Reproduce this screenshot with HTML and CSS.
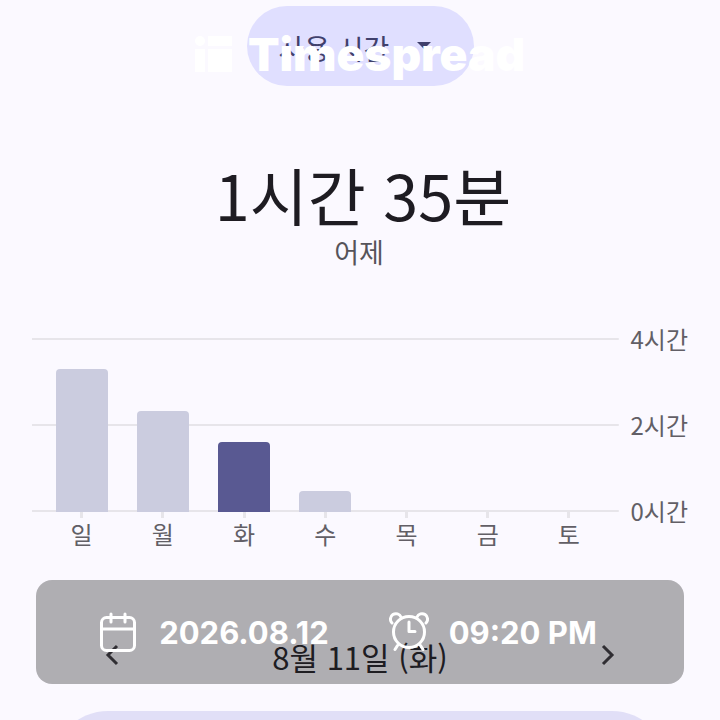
FILE: index.html
```html
<!DOCTYPE html>
<html lang="ko">
<head>
<meta charset="utf-8">
<meta name="viewport" content="width=device-width, initial-scale=1">
<title>Timespread</title>
<link rel="stylesheet" href="styles.css">
</head>
<body>
<main class="screen">
  <div class="picker">
    <select class="picker-select" aria-label="측정 항목"><option>사용 시간</option></select>
    <svg class="picker-caret" width="14" height="8" viewBox="0 0 14 8" aria-hidden="true"><path d="M0 0h14L7 7z"/></svg>
  </div>

  <header class="summary">
    <h1 class="total">1시간 35분</h1>
    <p class="day">어제</p>
  </header>

  <section class="chart" aria-label="주간 사용 시간">
    <div class="plot">
      <div class="bars">
        <div class="slot"><div class="bar" style="height:82%"></div></div>
        <div class="slot"><div class="bar" style="height:58%"></div></div>
        <div class="slot"><div class="bar selected" style="height:40%"></div></div>
        <div class="slot"><div class="bar" style="height:12%"></div></div>
        <div class="slot"></div>
        <div class="slot"></div>
        <div class="slot"></div>
      </div>
      <div class="days">
        <span>일</span><span>월</span><span>화</span><span>수</span><span>목</span><span>금</span><span>토</span>
      </div>
    </div>
    <div class="scale"><span>4시간</span><span>2시간</span><span>0시간</span></div>
  </section>

  <nav class="date-nav">
    <button class="arrow" type="button" aria-label="이전 날짜"><svg width="16" height="24" viewBox="0 0 16 24"><path d="M13 3 4 12l9 9"/></svg></button>
    <span>8월 11일 (화)</span>
    <button class="arrow" type="button" aria-label="다음 날짜"><svg width="16" height="24" viewBox="0 0 16 24"><path d="m3 3 9 9-9 9"/></svg></button>
  </nav>
  <div class="card"></div>

  <div class="brand">
    <svg width="37" height="36" viewBox="0 0 37 36" aria-hidden="true"><circle cx="5" cy="5" r="5"/><path d="M13 0h24v10H13zM0 13h10v23H0zM13 13h24v23H13z"/></svg>
    <span>Timespread</span>
  </div>

  <div class="stamp">
    <div class="stamp-item">
      <svg width="40" height="40" viewBox="0 0 40 40" aria-hidden="true"><rect x="2.500" y="5.500" width="33" height="33" rx="5"/><path d="M3 17h32M12 2v8M26 2v8"/></svg>
      <time datetime="2026-08-12">2026.08.12</time>
    </div>
    <div class="stamp-item">
      <svg width="40" height="40" viewBox="0 0 40 40" aria-hidden="true"><circle cx="20" cy="20" r="15.500"/><path d="M20 10v9.500h6M8.500 33.500 6 37.500M31.500 33.500l2.500 4M3 11a5.500 5.500 0 1 1 9-6M37 11a5.500 5.500 0 1 0-9-6"/></svg>
      <time datetime="21:20">09:20 PM</time>
    </div>
  </div>
</main>
</body>
</html>
```
FILE: styles.css
```css
* {
  box-sizing: border-box;
}

body {
  margin: 0;
  background: #fbf9ff;
  color: #1e1c22;
  font-family: "Noto Sans CJK KR", sans-serif;
}

.screen {
  position: relative;
  display: flex;
  flex-direction: column;
  height: 100vh;
  min-height: 720px;
  padding-top: 6px;
  overflow: hidden;
}

.screen > * {
  flex-shrink: 0;
}

.picker {
  display: flex;
  align-items: center;
  align-self: center;
  gap: 28px;
  height: 80px;
  padding: 0 43px 0 32px;
  border-radius: 40px;
  background: #e0dfff;
}

.picker-select {
  appearance: none;
  padding: 4px 0 0;
  border: 0;
  background: none;
  color: #40406c;
  font: 400 28px/40px "Noto Sans CJK KR", sans-serif;
}

.picker-caret {
  fill: #40406c;
}

.summary {
  margin-top: 68px;
  padding-left: 6px;
  text-align: center;
}

.total {
  margin: 0;
  font-size: 63px;
  font-weight: 400;
  line-height: 80px;
}

.day {
  margin: 0;
  padding-right: 8px;
  color: #56545a;
  font-size: 27px;
  line-height: 36px;
}

.chart {
  display: flex;
  gap: 12px;
  margin: 68px 32px 0;
  color: #625f66;
  font-size: 24px;
  line-height: 32px;
}

.plot {
  flex: 1;
}

.bars {
  display: grid;
  grid-template-columns: repeat(7, 1fr);
  height: 174px;
  padding: 0 9px;
  background:
    linear-gradient(#e7e5ea, #e7e5ea) top / 100% 2px no-repeat,
    linear-gradient(#e7e5ea, #e7e5ea) center / 100% 2px no-repeat,
    linear-gradient(#e7e5ea, #e7e5ea) bottom / 100% 2px no-repeat;
}

.slot {
  display: flex;
  align-items: flex-end;
  justify-content: center;
}

.bar {
  width: 52px;
  border-radius: 4px 4px 0 0;
  background: #cbccdf;
}

.selected {
  background: #595992;
}

.days {
  display: grid;
  grid-template-columns: repeat(7, 1fr);
  padding: 0 9px;
  text-align: center;
}

.days span::before {
  content: "";
  display: block;
  width: 3px;
  height: 6px;
  margin: 0 auto;
  background: #e7e5ea;
}

.scale {
  display: flex;
  flex-direction: column;
  justify-content: space-between;
  height: 204px;
  margin-top: -15px;
}

.date-nav {
  display: flex;
  align-items: center;
  justify-content: space-between;
  margin: 83px 104px 0;
  color: #2c2a31;
  font-size: 31px;
  line-height: 48px;
}

.arrow {
  display: flex;
  padding: 0 0 4px;
  border: 0;
  background: none;
  color: #45434a;
}

.arrow svg {
  fill: none;
  stroke: currentColor;
  stroke-width: 3;
}

.card {
  height: 160px;
  margin: 30px 52px 0;
  border-radius: 56px;
  background: #e1dff7;
}

.brand {
  position: absolute;
  top: 26px;
  right: 0;
  left: 0;
  display: flex;
  align-items: center;
  justify-content: center;
  gap: 16px;
  color: #fff;
  font: 900 46px/56px Inter, sans-serif;
}

.brand svg {
  fill: currentColor;
}

.stamp {
  position: absolute;
  top: 580px;
  right: 36px;
  left: 36px;
  display: flex;
  align-items: center;
  justify-content: center;
  gap: 60px;
  height: 104px;
  padding-right: 24px;
  border-radius: 16px;
  background: rgba(0, 0, 0, 0.3);
  color: #fff;
  font: 700 31px/40px Inter, sans-serif;
}

.stamp-item {
  display: flex;
  align-items: center;
  gap: 20px;
}

.stamp time {
  padding-top: 2px;
}

.stamp svg {
  fill: none;
  stroke: currentColor;
  stroke-width: 3;
  stroke-linecap: round;
  stroke-linejoin: round;
}
```
